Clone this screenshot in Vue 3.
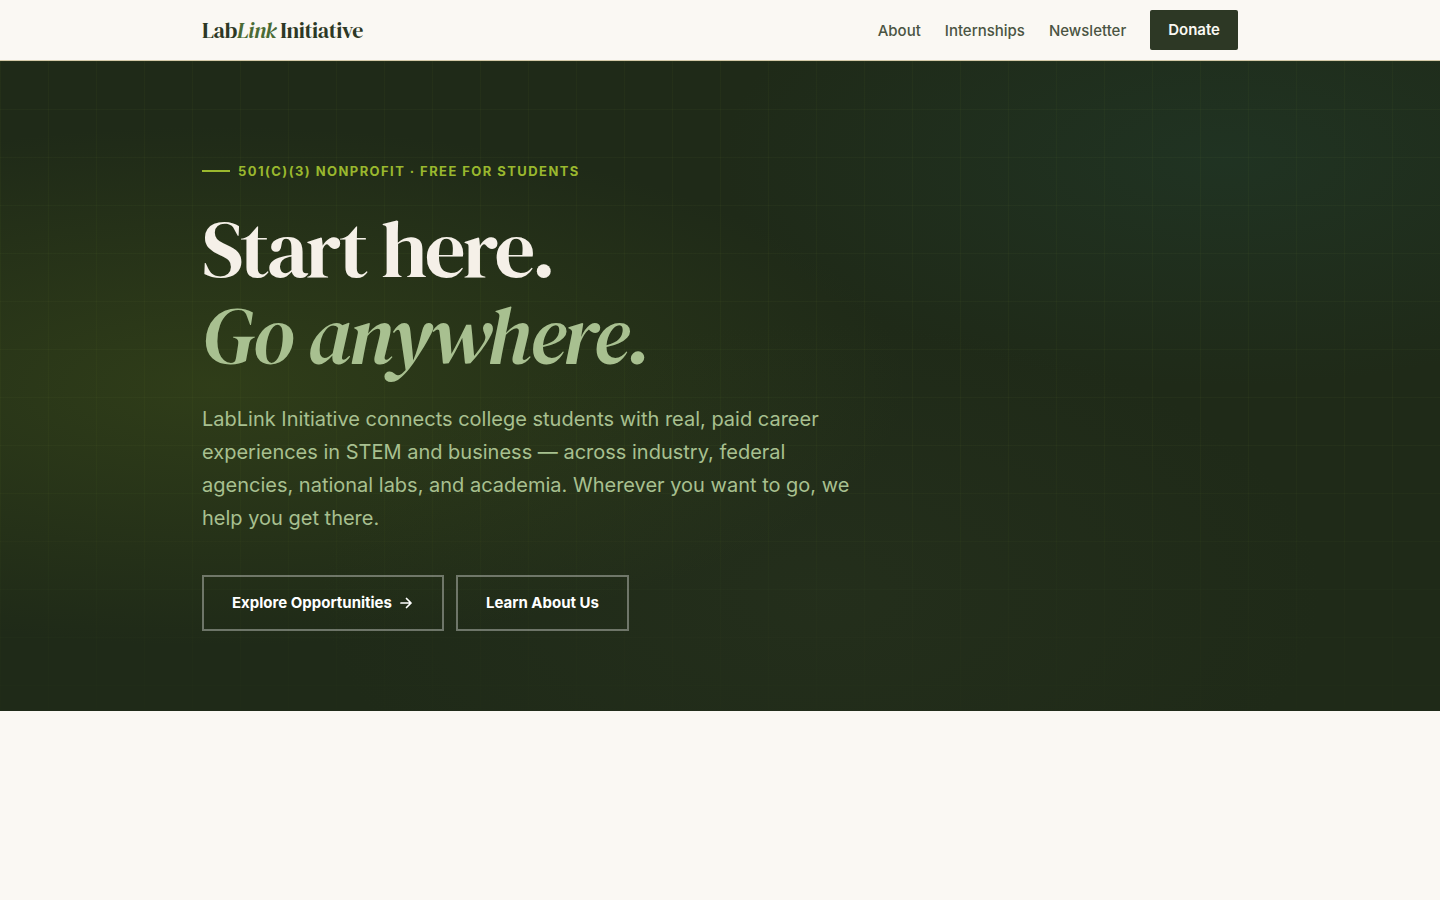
<script setup>
const links = ['About', 'Internships', 'Newsletter']
</script>

<template>
  <div class="page">
    <header class="header">
      <div class="container bar">
        <a class="logo" href="#">Lab<em>Link</em> Initiative</a>
        <nav class="nav" aria-label="Main">
          <a v-for="link in links" :key="link" class="nav-link" :href="'#' + link.toLowerCase()">{{ link }}</a>
          <a class="donate" href="#donate">Donate</a>
        </nav>
      </div>
    </header>
    <main>
      <section class="hero">
        <div class="container content">
          <p class="eyebrow">501(c)(3) Nonprofit · Free for Students</p>
          <h1 class="title">Start here.<br><em>Go anywhere.</em></h1>
          <p class="lede">
            LabLink Initiative connects college students with real, paid career experiences in STEM and
            business — across industry, federal agencies, national labs, and academia. Wherever you want
            to go, we help you get there.
          </p>
          <div class="actions">
            <a class="button" href="#internships">
              Explore Opportunities
              <svg class="arrow" viewBox="0 0 16 16" aria-hidden="true">
                <path d="M3 8h10M8.5 3.5 13 8l-4.5 4.5" />
              </svg>
            </a>
            <a class="button" href="#about">Learn About Us</a>
          </div>
        </div>
      </section>
    </main>
  </div>
</template>

<style>
body {
  margin: 0;
  background: #faf8f3;
}
</style>

<style scoped>
.page {
  font-family: Inter, "Liberation Sans", sans-serif;
  color: #2d3825;
}
.page * {
  box-sizing: border-box;
}
.container {
  width: 100%;
  max-width: 1100px;
  margin: 0 auto;
  padding: 0 32px;
}
.header {
  background: #faf8f3;
  border-bottom: 1px solid #d4c9a8;
}
.bar {
  display: flex;
  align-items: center;
  justify-content: space-between;
  min-height: 60px;
}
a {
  text-decoration: none;
}
.logo {
  font-family: "DM Serif Display", "Liberation Serif", serif;
  font-size: 22px;
  font-weight: 400;
  line-height: 25px;
  letter-spacing: -0.02em;
  color: #2d3825;
}
.logo em {
  color: #4a6b35;
}
.nav {
  display: flex;
  align-items: center;
  gap: 24px;
}
.nav-link {
  font-size: 15px;
  font-weight: 500;
  line-height: 25px;
  color: #4a5442;
}
.donate {
  padding: 8px 18px;
  border-radius: 2px;
  background: #2d3825;
  color: #faf8f3;
  font-size: 15px;
  font-weight: 600;
  line-height: 24px;
}
.hero {
  position: relative;
  padding: 100px 0 80px;
  background:
    radial-gradient(ellipse 60% 50% at 15% 50%, rgba(74, 92, 26, 0.38), transparent 80%),
    radial-gradient(ellipse 50% 50% at 85% 15%, rgba(34, 68, 54, 0.34), transparent 70%),
    radial-gradient(ellipse 50% 60% at 57% 82%, rgba(60, 70, 45, 0.16), transparent 70%),
    #1f2a18;
}
.hero::before {
  content: "";
  position: absolute;
  inset: 0;
  background-image:
    linear-gradient(rgba(120, 150, 70, 0.06) 1px, transparent 1px),
    linear-gradient(90deg, rgba(120, 150, 50, 0.06) 1px, transparent 1px);
  background-size: 48px 48px;
  mask-image: linear-gradient(#000 60%, rgba(0, 0, 0, 0.2));
}
.content {
  position: relative;
}
.eyebrow {
  display: flex;
  align-items: center;
  gap: 8px;
  margin: 0 0 25px;
  font-size: 13px;
  font-weight: 700;
  line-height: 20px;
  letter-spacing: 0.11em;
  text-transform: uppercase;
  color: #9ab82e;
}
.eyebrow::before {
  content: "";
  width: 28px;
  height: 2px;
  background: #9ab82e;
}
.title {
  margin: 0 0 25px;
  font-family: "DM Serif Display", "Liberation Serif", serif;
  font-size: 80px;
  font-weight: 400;
  line-height: 86px;
  letter-spacing: -0.03em;
  color: #f5f0e8;
}
.title em {
  color: #a8c090;
}
.lede {
  max-width: 660px;
  margin: 0 0 40px;
  font-size: 20px;
  line-height: 33px;
  color: #a8c090;
}
.actions {
  display: flex;
  flex-wrap: wrap;
  gap: 12px;
}
.button {
  display: inline-flex;
  align-items: center;
  gap: 6px;
  padding: 14px 28px;
  border: 2px solid rgba(255, 255, 255, 0.35);
  font-size: 15px;
  font-weight: 700;
  line-height: 24px;
  color: #fff;
}
.arrow {
  width: 16px;
  height: 16px;
  fill: none;
  stroke: currentColor;
  stroke-width: 1.7;
  stroke-linecap: round;
  stroke-linejoin: round;
}
</style>
